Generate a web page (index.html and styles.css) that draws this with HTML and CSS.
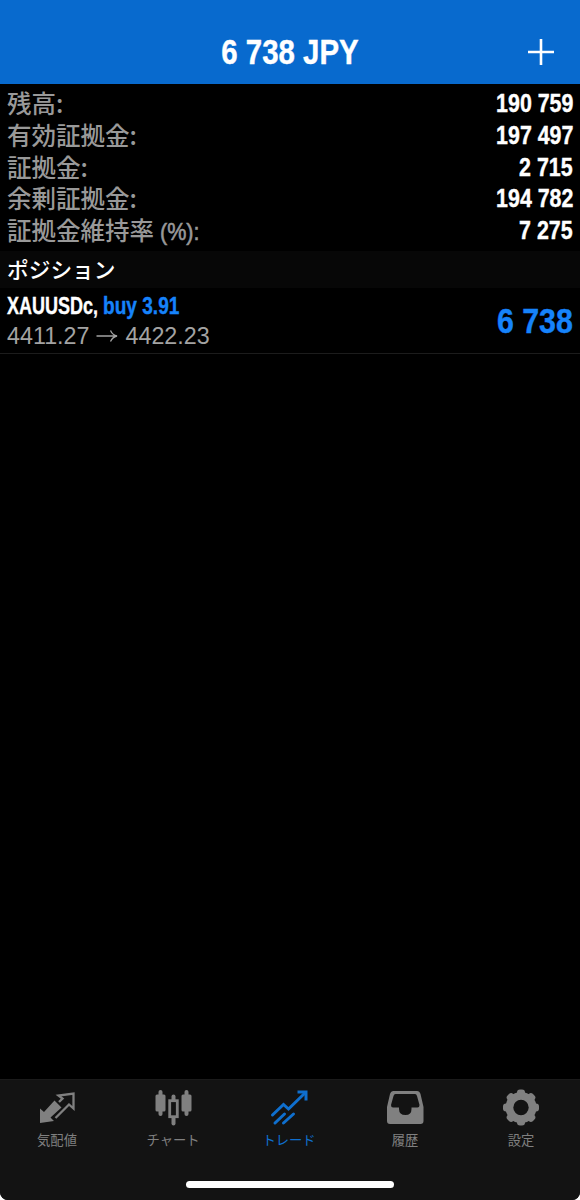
FILE: index.html
```html
<!DOCTYPE html>
<html lang="ja">
<head>
    <meta charset="UTF-8">
    <meta name="viewport" content="width=device-width, initial-scale=1.0">
    <title>トレード</title>
    <link rel="stylesheet" href="styles.css">
</head>
<body>
    <div class="app">
        <header class="header">
            <h1>6 738 JPY</h1>
            <button class="add" aria-label="新規注文">
                <svg width="28" height="28" viewBox="0 0 28 28"><path d="M14 1v26M1 14h26" stroke="#fff" stroke-width="2.6" fill="none"/></svg>
            </button>
        </header>

        <main class="content">
            <dl class="account">
                <div class="row"><dt>残高:</dt><dd>190 759</dd></div>
                <div class="row"><dt>有効証拠金:</dt><dd>197 497</dd></div>
                <div class="row"><dt>証拠金:</dt><dd>2 715</dd></div>
                <div class="row"><dt>余剰証拠金:</dt><dd>194 782</dd></div>
                <div class="row"><dt>証拠金維持率 <span class="unit">(%):</span></dt><dd>7 275</dd></div>
            </dl>

            <h2 class="section-title">ポジション</h2>

            <div class="position">
                <div class="position-info">
                    <div class="symbol"><span class="name">XAUUSDc,</span> <span class="side">buy 3.91</span></div>
                    <div class="prices">
                        <span>4411.27</span>
                        <svg width="22" height="14" viewBox="0 0 22 14"><path d="M0.5 7h20M14.500 1.500Q16.500 6 21 7Q16.500 8 14.500 12.500" stroke="#a3a3a3" stroke-width="1.3" fill="none"/></svg>
                        <span>4422.23</span>
                    </div>
                </div>
                <div class="profit">6 738</div>
            </div>
        </main>

        <nav class="tabs">
            <a class="tab" href="#">
                <svg width="40" height="40" viewBox="0 0 40 40">
                    <path d="M3 20.500L7 24L17.500 12.500L24.500 19.500L13.500 29.500L17 33L3 35Z" fill="currentColor"/>
                    <path d="M18.500 30L32 16.500L36.500 20.500V5.500L21.500 7.500L25.500 10.500L22 14" stroke="currentColor" stroke-width="2.300" fill="none"/>
                </svg>
                <span>気配値</span>
            </a>
            <a class="tab" href="#">
                <svg width="40" height="40" viewBox="0 0 40 40" fill="currentColor">
                    <rect x="5.500" y="2" width="4" height="26" rx="2"/>
                    <rect x="2.500" y="6.500" width="10" height="17" rx="1.500"/>
                    <rect x="31.500" y="2" width="4" height="26" rx="2"/>
                    <rect x="28.500" y="6.500" width="10" height="17" rx="1.500"/>
                    <rect x="18.500" y="6.500" width="4" height="7" rx="2"/>
                    <rect x="18.500" y="28" width="4" height="9.500" rx="2"/>
                    <rect x="16.700" y="12.700" width="7.600" height="16" fill="none" stroke="currentColor" stroke-width="2.800"/>
                </svg>
                <span>チャート</span>
            </a>
            <a class="tab active" href="#">
                <svg width="40" height="40" viewBox="0 0 40 40" fill="none" stroke="currentColor" stroke-width="3">
                    <path d="M3.500 27L14.500 16.500L19.500 21L36 5" stroke-linecap="round"/>
                    <path d="M28.500 4H37V12.500" />
                    <path d="M6 35L15.500 26M14.500 35L24.500 26" stroke-linecap="round"/>
                </svg>
                <span>トレード</span>
            </a>
            <a class="tab" href="#">
                <svg width="40" height="40" viewBox="0 0 40 40">
                    <path d="M8.500 3H32Q34.500 3 35.500 6L38.500 19V33Q38.500 36 35.500 36H5Q2 36 2 33V19L5 6Q6 3 8.500 3ZM10.500 6Q9 6 8.500 8L6 17Q6 19.500 8 19.500H14V21Q14 27 20.500 27Q26.500 27 26.500 21V19.500H32.500Q34.500 19.500 34.500 17L32 8Q31.500 6 30 6Z" fill="currentColor" fill-rule="evenodd"/>
                </svg>
                <span>履歴</span>
            </a>
            <a class="tab" href="#">
                <svg width="40" height="40" viewBox="0 0 40 40">
                    <g fill="currentColor">
                        <g id="cog"><rect x="16" y="1.500" width="8" height="36" rx="3"/><rect x="2" y="15.500" width="36" height="8" rx="3"/></g>
                        <use href="#cog" transform="rotate(45 20 19.500)"/>
                        <circle cx="20" cy="19.500" r="15.500"/>
                    </g>
                    <circle cx="20" cy="19.500" r="7.700" fill="#131313"/>
                </svg>
                <span>設定</span>
            </a>
        </nav>
        <div class="home-bar"></div>
    </div>
</body>
</html>
```

FILE: styles.css
```css
* {
    box-sizing: border-box;
}

body {
    margin: 0;
    background: #fff;
    font-family: "Noto Sans CJK JP", sans-serif;
}

.app {
    display: flex;
    flex-direction: column;
    height: 1200px;
    background: #000;
    border-radius: 0 0 8px 8px;
    overflow: hidden;
}

/* Condensed numbers */
.header h1,
.row dd,
.symbol,
.profit {
    font-family: "Liberation Sans", sans-serif;
    font-weight: bold;
    white-space: nowrap;
    -webkit-text-stroke: 0.4px currentColor;
}

.header {
    display: grid;
    grid-template-columns: 80px 1fr 80px;
    align-items: end;
    height: 84px;
    background: #086ace;
    color: #fff;
}

.header h1 {
    grid-column: 2;
    margin: 0 0 12px;
    text-align: center;
    font-size: 35px;
    line-height: 40px;
    transform: scaleX(0.84);
}

.add {
    display: flex;
    justify-content: center;
    padding: 0 0 0 2px;
    margin-bottom: 18px;
    border: none;
    background: none;
}

.content {
    flex: 1;
}

.account {
    margin: 0;
    padding: 3px 7px 4px;
    height: 167px;
}

.row {
    display: flex;
    justify-content: space-between;
    height: 31.8px;
    line-height: 31px;
    font-size: 24.5px;
}

.row dt {
    color: #999;
    font-weight: 500;
}

.row dd {
    margin: 0;
    padding-top: 1px;
    color: #fff;
    font-size: 25px;
    transform: scaleX(0.855);
    transform-origin: right;
}

.unit {
    display: inline-block;
    font-family: "Liberation Sans", sans-serif;
    -webkit-text-stroke: 0.6px #999;
    transform: scaleX(0.88);
    transform-origin: left;
}

.section-title {
    margin: 0;
    padding-left: 7px;
    height: 37px;
    line-height: 35px;
    background: #070707;
    color: #fff;
    font-size: 21.7px;
    font-weight: 500;
}

.position {
    display: flex;
    align-items: center;
    justify-content: space-between;
    height: 66px;
    padding: 0 7px;
    border-bottom: 1px solid #1c1c1c;
}

.symbol {
    display: flex;
    color: #fff;
    font-size: 24px;
    line-height: 30px;
}

.name {
    width: 96px;
    transform: scaleX(0.75);
    transform-origin: left;
}

.side {
    transform: scaleX(0.795);
    transform-origin: left;
}

.side,
.profit {
    color: #1683fb;
}

.prices {
    display: flex;
    align-items: center;
    gap: 7px;
    color: #a3a3a3;
    font-family: "Liberation Sans", sans-serif;
    font-size: 23.3px;
    line-height: 30px;
}

.profit {
    padding-top: 2px;
    font-size: 35.5px;
    transform: scaleX(0.855);
    transform-origin: right;
}

.tabs {
    display: grid;
    grid-template-columns: repeat(5, 1fr);
    height: 100px;
    padding-top: 8px;
    background: #131313;
    border-top: 1px solid #1b1b1b;
}

.tab {
    display: flex;
    flex-direction: column;
    align-items: center;
    padding-right: 2px;
    color: #808080;
    font-size: 13.3px;
    line-height: 20px;
    text-decoration: none;
}

.tab span {
    margin-top: 2px;
}

.tab.active {
    color: #0f6fce;
}

.home-bar {
    height: 21px;
    padding-top: 2px;
    background: #131313;
}

.home-bar::before {
    content: "";
    display: block;
    width: 208px;
    height: 7px;
    margin: 0 auto;
    border-radius: 4px;
    background: #fff;
}
```
